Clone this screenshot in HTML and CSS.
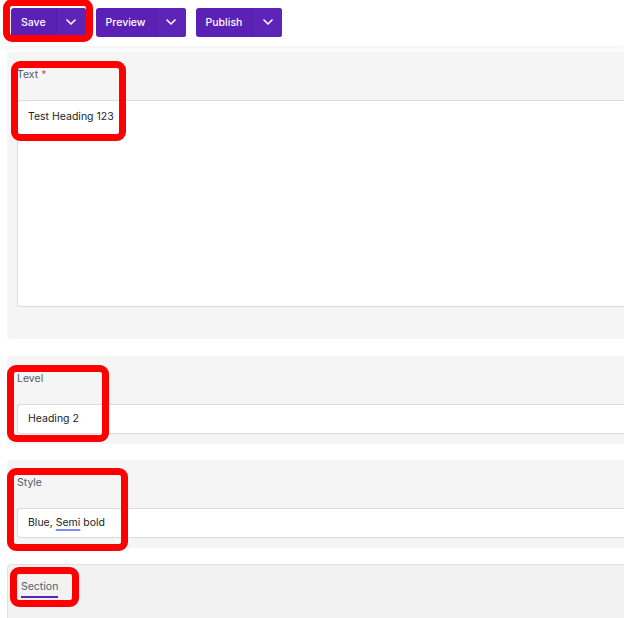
FILE: index.html
```html
<!DOCTYPE html>
<html lang="en">
<head>
    <meta charset="UTF-8">
    <meta name="viewport" content="width=device-width, initial-scale=1.0">
    <title>Heading block</title>
    <link rel="stylesheet" href="styles.css">
</head>
<body>

    <div class="page">
        <div class="toolbar">
            <div class="split-btn">
                <button class="btn-main">Save</button>
                <button class="btn-caret"><svg width="10" height="6" viewBox="0 0 10 6"><polyline points="1,1 5,5 9,1"/></svg></button>
            </div>
            <div class="split-btn">
                <button class="btn-main">Preview</button>
                <button class="btn-caret"><svg width="10" height="6" viewBox="0 0 10 6"><polyline points="1,1 5,5 9,1"/></svg></button>
            </div>
            <div class="split-btn">
                <button class="btn-main">Publish</button>
                <button class="btn-caret"><svg width="10" height="6" viewBox="0 0 10 6"><polyline points="1,1 5,5 9,1"/></svg></button>
            </div>
        </div>

        <div class="form">
            <div class="panel panel-text">
                <label class="field-label">Text <span class="required">*</span></label>
                <div class="textarea">Test Heading 123</div>
            </div>

            <div class="panel">
                <label class="field-label">Level</label>
                <div class="input">Heading 2</div>
            </div>

            <div class="panel">
                <label class="field-label">Style</label>
                <div class="input">Blue, <span class="spell">Semi</span> bold</div>
            </div>

            <div class="panel panel-tabs">
                <span class="tab active">Section</span>
            </div>
        </div>

        <!-- red highlight frames -->
        <div class="mark mark-save"></div>
        <div class="mark mark-text"></div>
        <div class="mark mark-level"></div>
        <div class="mark mark-style"></div>
        <div class="mark mark-section"></div>
    </div>

</body>
</html>
```

FILE: styles.css
```css
html, body {
    margin: 0;
    overflow: hidden;
}

body {
    font-family: 'Inter', 'Liberation Sans', sans-serif;
    background-color: #fff;
    color: #222;
    font-size: 10.5px;
}

.page {
    position: relative;
    height: 618px;
}

.toolbar {
    height: 44px;
    display: flex;
    align-items: center;
    gap: 10px;
    padding: 0 0 2px 11px;
    background: #fff;
    box-shadow: 0 3px 5px rgba(0, 0, 0, 0.05);
    position: relative;
}

.split-btn {
    display: flex;
    height: 29px;
    border-radius: 3px;
    overflow: hidden;
    background-color: #5b20b5;
}

.split-btn button {
    border: none;
    background: transparent;
    color: #fff;
    font-family: inherit;
    font-size: 10.5px;
    font-weight: 500;
    cursor: pointer;
    margin: 0;
}

.btn-main {
    padding: 0 10px;
}

.btn-caret {
    width: 30px;
    padding: 0;
    display: flex;
    align-items: center;
    justify-content: center;
    border-left: 1px solid rgba(0, 0, 0, 0.12) !important;
    background-color: #5e24b8 !important;
}

.btn-caret polyline {
    fill: none;
    stroke: #fff;
    stroke-width: 1.6;
    stroke-linecap: round;
    stroke-linejoin: round;
}

.form {
    display: flex;
    flex-direction: column;
    gap: 16px;
    padding: 6px 0 0 7px;
    margin-right: -20px;
}

.panel {
    background-color: #f5f5f5;
    border-radius: 4px 0 0 4px;
    padding: 15px 0 10px 10px;
}

.panel-text {
    padding-bottom: 32px;
    margin-bottom: 1px;
}

.field-label {
    display: block;
    line-height: 16px;
    color: #545b66;
    margin-bottom: 17px;
}

.required {
    color: #e5484d;
}

.textarea, .input {
    background: #fff;
    border: 1px solid #dadada;
    border-right: none;
    border-radius: 3px 0 0 3px;
    padding-left: 10px;
    box-sizing: border-box;
    color: #222;
}

.textarea {
    height: 207px;
    padding-top: 8px;
    line-height: 16px;
}

.input {
    height: 30px;
    line-height: 28px;
}

.spell {
    text-decoration: underline;
    text-decoration-color: #7c8cf2;
    text-decoration-thickness: 2px;
    text-underline-offset: 3px;
}

.panel-tabs {
    background-color: #f2f2f2;
    border-top: 1px solid #e2e2e2;
    border-left: 1px solid #e2e2e2;
    border-radius: 4px 0 0 0;
    padding: 14px 0 30px 13px;
}

.tab {
    display: inline-block;
    line-height: 16px;
    color: #555d68;
}

.tab.active {
    border-bottom: 2px solid #5b20b5;
    padding-bottom: 1px;
}

.mark {
    position: absolute;
    border: 7px solid #ff0000;
    border-radius: 9px;
    box-sizing: border-box;
}

.mark-save {
    left: 3px;
    top: -1px;
    width: 90px;
    height: 43px;
}

.mark-text {
    left: 11px;
    top: 61px;
    width: 115px;
    height: 80px;
}

.mark-level {
    left: 7px;
    top: 365px;
    width: 102px;
    height: 77px;
}

.mark-style {
    left: 7px;
    top: 468px;
    width: 121px;
    height: 83px;
}

.mark-section {
    left: 10px;
    top: 567px;
    width: 69px;
    height: 40px;
}
```
